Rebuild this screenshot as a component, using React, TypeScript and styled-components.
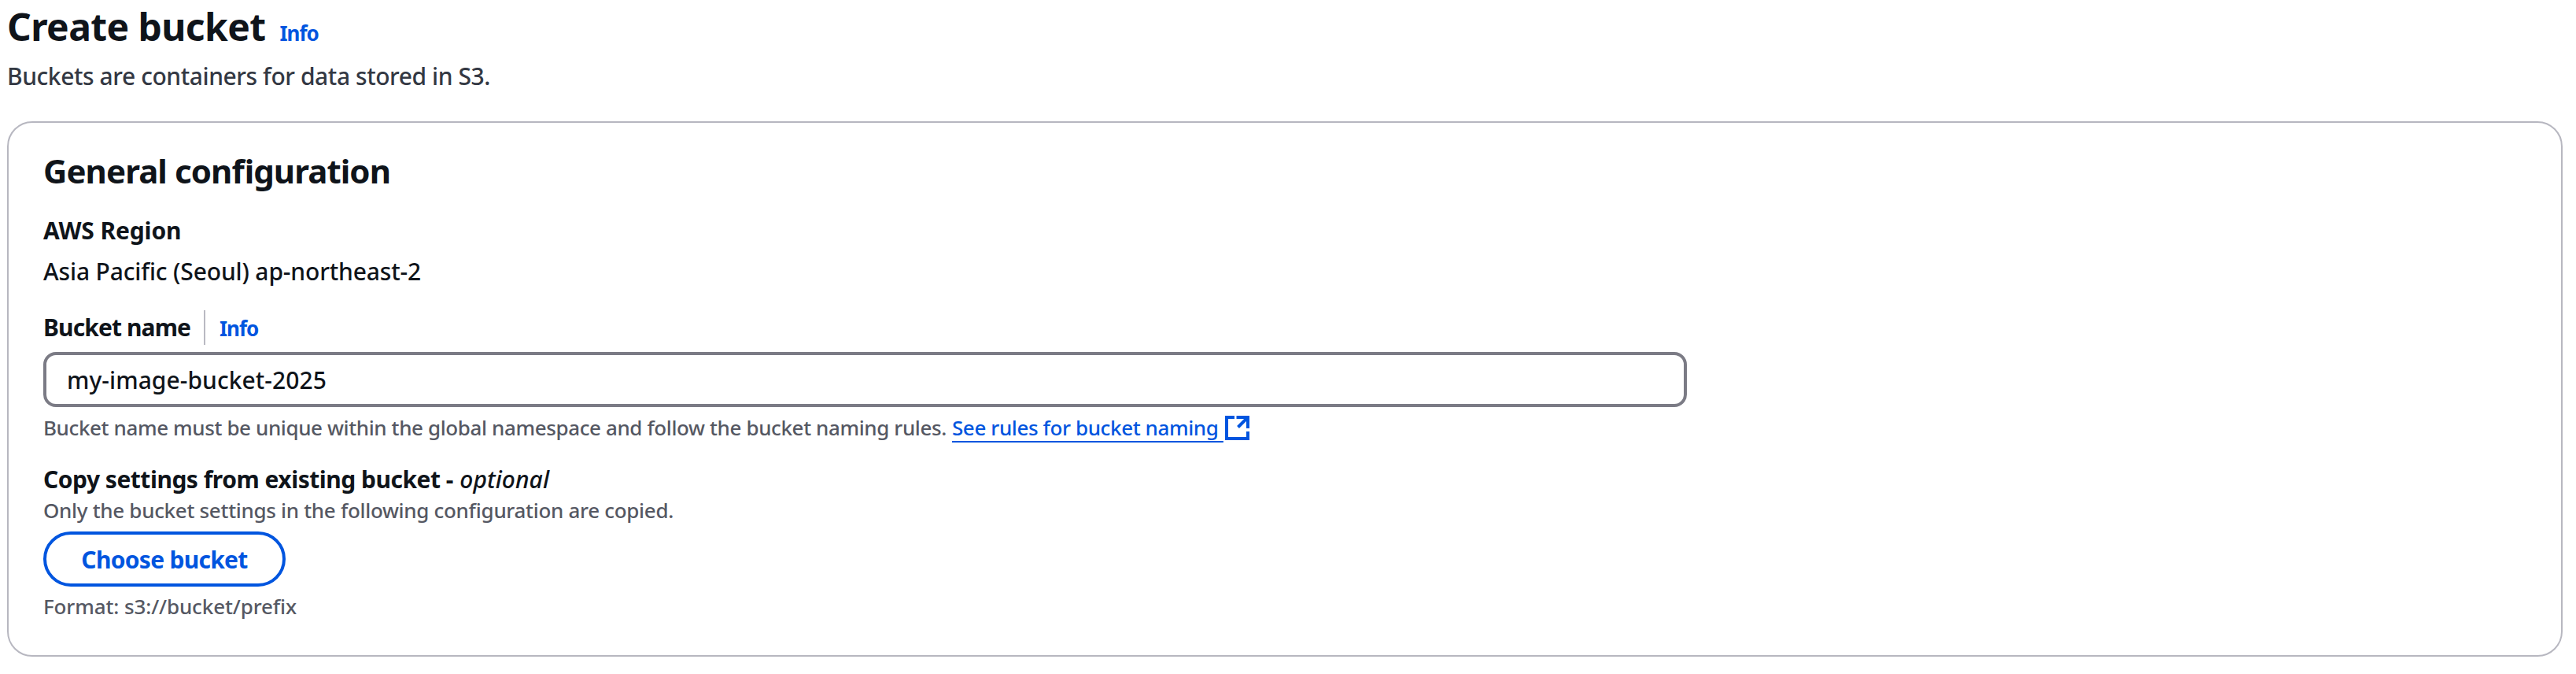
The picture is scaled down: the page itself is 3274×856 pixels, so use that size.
import React from "react";
import styled, { createGlobalStyle } from "styled-components";

const colors = {
  heading: "#0f141a",
  body: "#0f141a",
  description: "#333843",
  secondary: "#555863",
  link: "#0055df",
  cardBorder: "#b7b7c0",
  divider: "#b9b9c2",
  inputBorder: "#7b7b85",
};

const GlobalStyle = createGlobalStyle`
  * { box-sizing: border-box; }
  body {
    margin: 0;
    background: #ffffff;
    color: ${colors.body};
    font-family: "Noto Sans", "Open Sans", sans-serif;
    font-feature-settings: "liga" 1;
  }
`;

const Page = styled.main`
  display: flex;
  flex-direction: column;
  height: 856px;
  padding: 1px 17px 22px 9px;
  overflow: hidden;
`;

const TitleRow = styled.header`
  display: flex;
  align-items: baseline;
  gap: 18px;
`;

const Title = styled.h1`
  margin: 0;
  font-size: 48px;
  line-height: 65px;
  font-weight: 700;
  letter-spacing: -0.6px;
  color: ${colors.heading};
`;

const InfoLink = styled.a`
  font-size: 26px;
  line-height: 36px;
  font-weight: 700;
  letter-spacing: -1px;
  color: ${colors.link};
`;

const PageDescription = styled.p`
  margin: 10px 0 37px;
  font-size: 30px;
  line-height: 41px;
  font-weight: 500;
  letter-spacing: -0.43px;
  color: ${colors.description};
`;

const Card = styled.section`
  display: flex;
  flex-direction: column;
  align-items: flex-start;
  height: 680px;
  padding: 32px 44px 44px;
  border: 2px solid ${colors.cardBorder};
  border-radius: 32px;
`;

const CardTitle = styled.h2`
  margin: 0 0 27px;
  font-size: 42px;
  line-height: 57px;
  font-weight: 700;
  letter-spacing: -0.93px;
  color: ${colors.heading};
`;

const Label = styled.div<{ $tracking: number }>`
  font-size: 30px;
  line-height: 41px;
  font-weight: 700;
  white-space: pre;
  letter-spacing: ${(p) => p.$tracking}px;
`;

const Value = styled.div`
  margin: 11px 0 29px;
  font-size: 30px;
  line-height: 41px;
  font-weight: 500;
  letter-spacing: -0.15px;
`;

const LabelRow = styled.div`
  display: flex;
  align-items: baseline;
  height: 44px;
  padding-top: 1px;
`;

const Divider = styled.span`
  align-self: stretch;
  width: 2px;
  margin: -1px 18px 0 17px;
  background: ${colors.divider};
`;

const TextInput = styled.input`
  width: 2089px;
  height: 70px;
  margin: 9px 0 8px;
  padding: 0 26px;
  border: 4px solid ${colors.inputBorder};
  border-radius: 16px;
  outline: none;
  background: #ffffff;
  color: ${colors.body};
  font: 500 30px/41px "Noto Sans", "Open Sans", sans-serif;
  letter-spacing: 0.05px;
`;

const Hint = styled.div<{ $tracking: number }>`
  display: flex;
  align-items: flex-start;
  font-size: 26px;
  line-height: 36px;
  font-weight: 500;
  white-space: pre;
  letter-spacing: ${(p) => p.$tracking}px;
  color: ${colors.secondary};
`;

const RulesLink = styled.a`
  margin-left: 7px;
  color: ${colors.link};
  text-decoration: underline;
  text-decoration-thickness: 2px;
  text-decoration-skip-ink: none;
  text-underline-offset: 7px;
`;

const ExternalIcon = styled.svg`
  width: 31px;
  height: 31px;
  margin: 3px 0 0 2px;
  fill: none;
  stroke: ${colors.link};
  stroke-width: 4;
`;

const CopySettings = styled.div`
  display: flex;
  flex-direction: column;
  align-items: flex-start;
  gap: 1px;
  margin-top: 27px;
`;

const Optional = styled.em`
  margin-left: 1px;
  font-weight: 500;
  letter-spacing: 0.05px;
`;

const ChooseButton = styled.button`
  width: 308px;
  height: 70px;
  margin: 9px 0 7px;
  padding: 0;
  border: 4px solid ${colors.link};
  border-radius: 35px;
  background: #ffffff;
  color: ${colors.link};
  font: 700 30px/41px "Noto Sans", "Open Sans", sans-serif;
  letter-spacing: -0.71px;
`;

export default function App() {
  return (
    <>
      <GlobalStyle />
      <Page>
        <TitleRow>
          <Title>Create bucket</Title>
          <InfoLink>Info</InfoLink>
        </TitleRow>
        <PageDescription>Buckets are containers for data stored in S3.</PageDescription>
        <Card>
          <CardTitle>General configuration</CardTitle>
          <Label $tracking={-0.12}>AWS Region</Label>
          <Value>Asia Pacific (Seoul) ap-northeast-2</Value>
          <LabelRow>
            <Label $tracking={-0.9}>Bucket name</Label>
            <Divider />
            <InfoLink>Info</InfoLink>
          </LabelRow>
          <TextInput defaultValue="my-image-bucket-2025" aria-label="Bucket name" />
          <Hint $tracking={-0.39}>
            <span>Bucket name must be unique within the global namespace and follow the bucket naming rules.</span>
            <RulesLink>See rules for bucket naming </RulesLink>
            <ExternalIcon viewBox="0 0 31 31" aria-hidden="true">
              <path d="M12 2H2V29H29V20M14.5 2H29V16M29 2L16.5 14.5" />
            </ExternalIcon>
          </Hint>
          <CopySettings>
            <Label $tracking={-0.49}>
              Copy settings from existing bucket - <Optional>optional</Optional>
            </Label>
            <Hint $tracking={-0.31}>Only the bucket settings in the following configuration are copied.</Hint>
          </CopySettings>
          <ChooseButton type="button">Choose bucket</ChooseButton>
          <Hint $tracking={-0.12}>Format: s3://bucket/prefix</Hint>
        </Card>
      </Page>
    </>
  );
}
